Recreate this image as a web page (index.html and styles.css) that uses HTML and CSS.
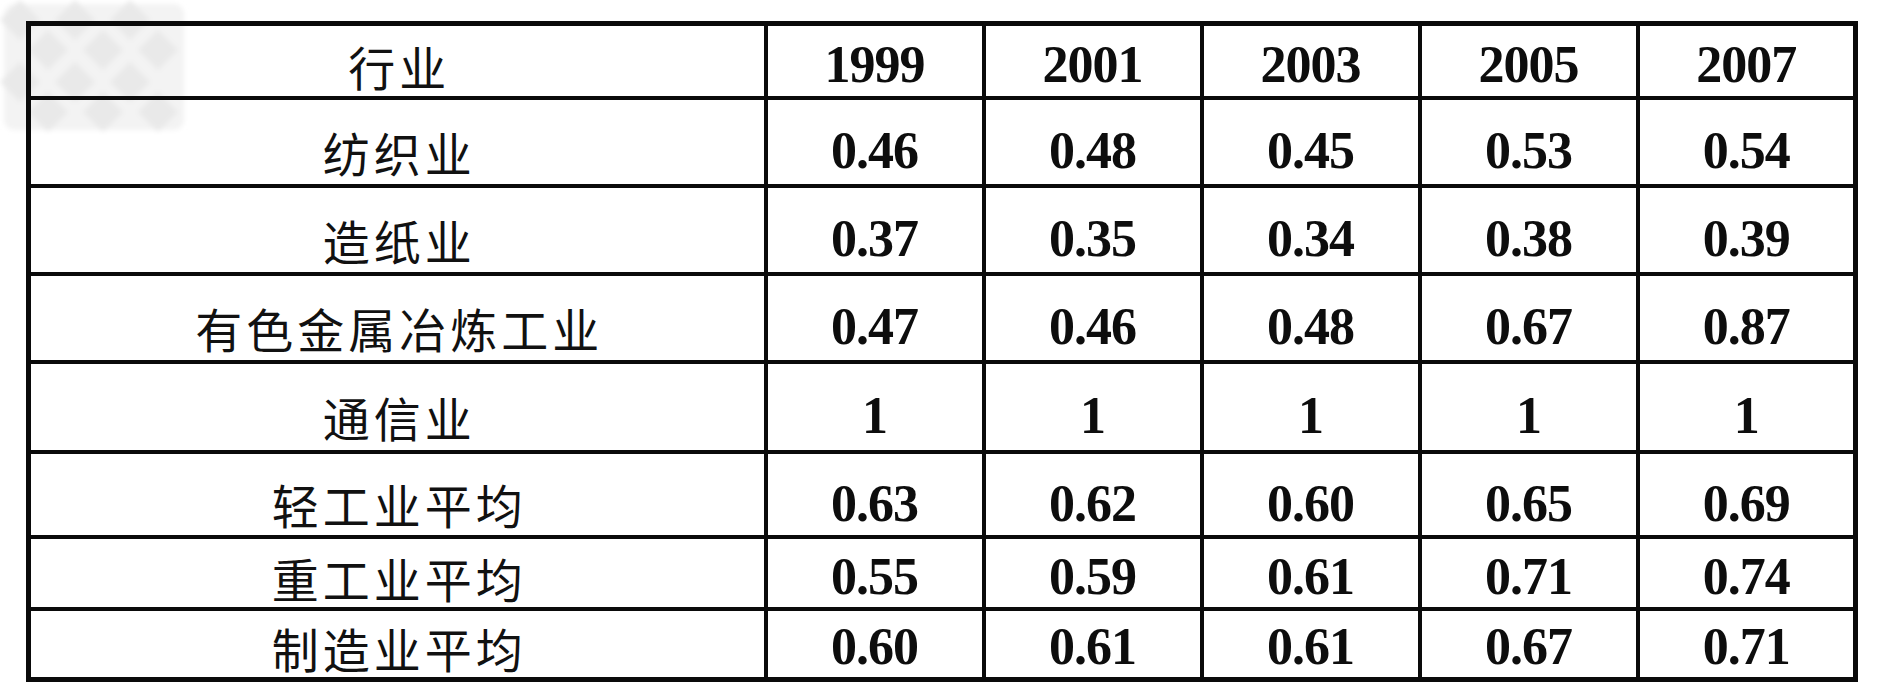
FILE: index.html
```html
<!DOCTYPE html>
<html lang="zh-CN">
<head>
    <meta charset="UTF-8">
    <meta name="viewport" content="width=device-width, initial-scale=1.0">
    <title>行业指标 1999-2007</title>
    <link rel="stylesheet" href="styles.css">
</head>
<body>
    <div class="page">
        <svg class="stamp" width="190" height="135" viewBox="0 0 190 135">
            <defs>
                <filter id="soft"><feGaussianBlur stdDeviation="2.5"/></filter>
            </defs>
            <g filter="url(#soft)">
                <rect x="4" y="4" width="180" height="126" rx="10" fill="#f3f3f3"/>
                <path d="M20 0 L40 20 L20 40 L0 20 Z M75 0 L95 20 L75 40 L55 20 Z M130 0 L150 20 L130 40 L110 20 Z M48 30 L68 50 L48 70 L28 50 Z M103 30 L123 50 L103 70 L83 50 Z M158 30 L178 50 L158 70 L138 50 Z M20 62 L40 82 L20 102 L0 82 Z M75 62 L95 82 L75 102 L55 82 Z M130 62 L150 82 L130 102 L110 82 Z M48 92 L68 112 L48 132 L28 112 Z M103 92 L123 112 L103 132 L83 112 Z M158 92 L178 112 L158 132 L138 112 Z" fill="#e9e9e9"/>
            </g>
        </svg>

        <table class="data">
            <colgroup>
                <col class="c-name">
                <col class="c-year">
                <col class="c-year">
                <col class="c-year">
                <col class="c-year">
                <col class="c-year">
            </colgroup>
            <tr class="r-head">
                <td class="name">行业</td>
                <td>1999</td>
                <td>2001</td>
                <td>2003</td>
                <td>2005</td>
                <td>2007</td>
            </tr>
            <tr class="r-tall">
                <td class="name">纺织业</td>
                <td>0.46</td>
                <td>0.48</td>
                <td>0.45</td>
                <td>0.53</td>
                <td>0.54</td>
            </tr>
            <tr class="r-tall">
                <td class="name">造纸业</td>
                <td>0.37</td>
                <td>0.35</td>
                <td>0.34</td>
                <td>0.38</td>
                <td>0.39</td>
            </tr>
            <tr class="r-tall">
                <td class="name">有色金属冶炼工业</td>
                <td>0.47</td>
                <td>0.46</td>
                <td>0.48</td>
                <td>0.67</td>
                <td>0.87</td>
            </tr>
            <tr class="r-taller">
                <td class="name">通信业</td>
                <td>1</td>
                <td>1</td>
                <td>1</td>
                <td>1</td>
                <td>1</td>
            </tr>
            <tr class="r-mid">
                <td class="name">轻工业平均</td>
                <td>0.63</td>
                <td>0.62</td>
                <td>0.60</td>
                <td>0.65</td>
                <td>0.69</td>
            </tr>
            <tr class="r-short">
                <td class="name">重工业平均</td>
                <td>0.55</td>
                <td>0.59</td>
                <td>0.61</td>
                <td>0.71</td>
                <td>0.74</td>
            </tr>
            <tr class="r-shorter">
                <td class="name">制造业平均</td>
                <td>0.60</td>
                <td>0.61</td>
                <td>0.61</td>
                <td>0.67</td>
                <td>0.71</td>
            </tr>
        </table>
    </div>
</body>
</html>
```

FILE: styles.css
```css
body {
    margin: 0;
    background-color: #ffffff;
}
.page {
    position: relative;
    padding: 21px 0 0 26px;
}
.stamp {
    position: absolute;
    top: 0;
    left: 0;
    z-index: 0;
}
.data {
    position: relative;
    z-index: 1;
    border-collapse: collapse;
    table-layout: fixed;
    width: 1830px;
    border: 5px solid #0a0a0a;
}
.c-name {
    width: 737px;
}
.c-year {
    width: 218px;
}
.data td {
    border: 4px solid #0a0a0a;
    text-align: center;
    vertical-align: middle;
    padding: 18px 0 0 0;
    font-family: "Liberation Serif", "Times New Roman", serif;
    font-weight: bold;
    font-size: 52px;
    line-height: 1;
    color: #0d0d0d;
    letter-spacing: -1px;
}
.data td.name {
    font-family: "Noto Sans CJK SC", sans-serif;
    font-weight: normal;
    font-size: 47px;
    letter-spacing: 4px;
    padding-left: 4px;
    color: #111111;
}
.r-head td {
    height: 62px;
    padding-top: 8px;
}
.r-tall td {
    height: 66px;
}
.r-taller td {
    height: 68px;
}
.r-mid td {
    height: 63px;
}
.r-short td {
    height: 60px;
    padding-top: 8px;
}
.r-shorter td {
    height: 60px;
    padding-top: 6px;
}
```
